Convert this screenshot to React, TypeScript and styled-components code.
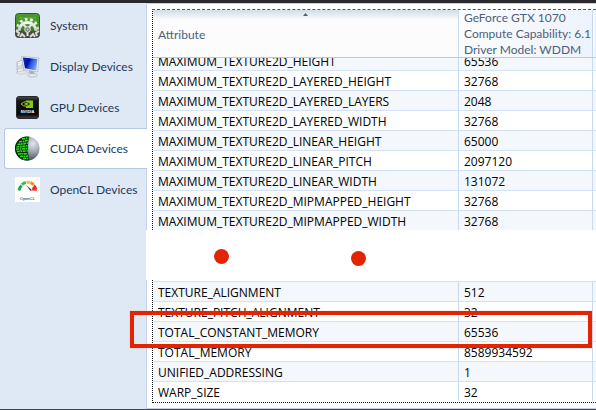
import React from "react";
import styled, { createGlobalStyle, css } from "styled-components";

const GlobalStyle = createGlobalStyle`
  * { box-sizing: border-box; }
  body {
    margin: 0;
    background: #ffffff;
    font-family: "Open Sans", "Noto Sans", sans-serif;
    font-size: 12px;
  }
`;

const Window = styled.div`
  display: flex;
  flex-direction: column;
  min-height: 100vh;
  border-top: 3px solid #29282f;
  border-bottom: 1px solid #3c4353;
  background: #dfe8f5;
  overflow: hidden;
`;

const Body = styled.div`
  display: flex;
  flex: 1;
`;

const Sidebar = styled.nav`
  display: flex;
  flex-direction: column;
  flex: none;
  width: 146px;
  padding: 2px 0 0 4px;
  font-family: Lato, sans-serif;
`;

const NavButton = styled.button<{ $selected?: boolean }>`
  display: flex;
  align-items: center;
  gap: 10px;
  height: 41px;
  padding: 0 0 0 10px;
  border: 1px solid transparent;
  border-right: 0;
  border-radius: 3px 0 0 3px;
  background: transparent;
  color: #1e395b;
  font: inherit;
  text-align: left;
  white-space: nowrap;
  ${(p) =>
    p.$selected &&
    css`
      position: relative;
      z-index: 1;
      margin-right: -1px;
      background: #ffffff;
      border-color: #b5c9e3;
    `}
`;

const IconSvg = styled.svg`
  flex: none;
  width: 25px;
  height: 25px;
`;

const Content = styled.main`
  display: flex;
  flex-direction: column;
  flex: 1;
  min-width: 0;
  background: #ffffff;
  border-top: 1px solid #c3d2e6;
`;

const Pane = styled.section<{ $edge: "top" | "bottom" }>`
  position: relative;
  border-left: 1px solid #c3d2e6;
  padding: ${(p) => (p.$edge === "top" ? "5px 0 0 5px" : "0 0 5px 5px")};
  border-bottom: ${(p) => (p.$edge === "bottom" ? "1px solid #c3d2e6" : "0")};
`;

const GridFrame = styled.div<{ $edge: "top" | "bottom" }>`
  border-left: 1px dotted #10131a;
  ${(p) =>
    p.$edge === "top"
      ? "border-top: 1px dashed #4d5666;"
      : "padding: 1px 0; border-bottom: 1px dotted #10131a;"}
`;

const Table = styled.table`
  width: 100%;
  table-layout: fixed;
  border-collapse: separate;
  border-spacing: 0;
  color: #000000;
`;

const ValueCol = styled.col`
  width: 134px;
`;

const EdgeCol = styled.col`
  width: 3px;
`;

const HeadCell = styled.th<{ $tinted?: boolean }>`
  height: 48px;
  padding: 0 0 0 5px;
  border-bottom: 1px solid #bccad6;
  border-right: 1px solid #c6daf3;
  background: ${(p) =>
    p.$tinted
      ? "linear-gradient(90deg, #fbfcfe, #edf3fc)"
      : "linear-gradient(#d3dce8, #fcfcfc 10px)"};
  color: #4c607a;
  font-family: Lato, sans-serif;
  font-weight: 400;
  line-height: 16px;
  text-align: left;
  white-space: nowrap;
  &:last-child { border-right: 0; padding: 0; }
`;

const HeadContent = styled.div<{ $top?: boolean }>`
  position: relative;
  display: flex;
  align-items: ${(p) => (p.$top ? "flex-start" : "center")};
  height: 47px;
  padding-top: ${(p) => (p.$top ? "0" : "2px")};
`;

const SortMark = styled.svg`
  position: absolute;
  top: 3px;
  left: 50%;
  width: 5px;
  height: 3px;
  margin-left: -5px;
`;

const Row = styled.tr<{ $shaded: boolean }>`
  background: ${(p) => (p.$shaded ? "#f4f7fb" : "#ffffff")};
`;

const Cell = styled.td<{ $line: boolean }>`
  padding: 0 0 0 5px;
  border-right: 1px solid #c6daf3;
  border-bottom: ${(p) => (p.$line ? "1px solid #d3e2f5" : "0")};
  &:last-child { border-right: 0; padding: 0; }
`;

const CellText = styled.div<{ $clipped?: boolean }>`
  display: flex;
  align-items: flex-end;
  height: ${(p) => (p.$clipped ? "12px" : "19px")};
  line-height: 17px;
  overflow: hidden;
  white-space: nowrap;
`;

const RedactedBand = styled.div`
  position: relative;
  height: 50px;
  background: #ffffff;
`;

const Dot = styled.span<{ $left: number; $top: number }>`
  position: absolute;
  left: ${(p) => p.$left}px;
  top: ${(p) => p.$top}px;
  width: 15px;
  height: 15px;
  border-radius: 50%;
  background: #e32400;
`;

const Highlight = styled.div`
  position: absolute;
  top: 31px;
  left: -17px;
  right: 4px;
  height: 37px;
  border: 4px solid #e32400;
  box-shadow: 0 0 1px #f3a091;
`;

const SystemIcon = () => (
  <IconSvg viewBox="0 0 25 25" aria-hidden="true">
    <defs>
      <linearGradient id="sysBg" x1="0" y1="0" x2="0" y2="1">
        <stop offset="0" stopColor="#4f9a2e" />
        <stop offset="0.6" stopColor="#3f8a22" />
        <stop offset="1" stopColor="#2c4a1c" />
      </linearGradient>
      <linearGradient id="sysGear" x1="0" y1="0" x2="0" y2="1">
        <stop offset="0" stopColor="#ffffff" />
        <stop offset="1" stopColor="#c3c4c0" />
      </linearGradient>
    </defs>
    <rect x="0.5" y="0.5" width="24" height="24" rx="3" fill="url(#sysBg)" stroke="#385527" />
    <path d="M1 19Q5 16 8 18T17 18T24 19V22Q24 24 22 24H3Q1 24 1 22Z" fill="#4b4b43" />
    <path d="M4 5H21M3 8H22" stroke="#79bd58" strokeWidth="0.8" />
    <g stroke="url(#sysGear)" fill="none">
      <path d="M4 18A8.5 8.5 0 1 1 21 18" strokeWidth="3" />
      <path d="M2.5 19A10.3 10.3 0 1 1 22.5 19" strokeWidth="2.6" strokeDasharray="2.6 2.7" />
    </g>
    <path d="M12.5 16L7 10M12.5 16L18 10M12.5 16V23" stroke="#e4e5e2" strokeWidth="2" />
    <path d="M1 18L4 20L3 23M24 18L21 20L22 23M5 24L7 21L10 24M15 24L18 21L20 24" fill="none" stroke="#dcddda" strokeWidth="2" />
    <circle cx="12.5" cy="16.5" r="2.8" fill="#767970" stroke="#f0f0ee" />
    <circle cx="12.5" cy="16.5" r="1" fill="#d9dad6" />
  </IconSvg>
);

const DisplayIcon = () => (
  <IconSvg viewBox="0 0 25 25" aria-hidden="true">
    <defs>
      <linearGradient id="dispScreen" x1="0" y1="0.3" x2="1" y2="0.7">
        <stop offset="0" stopColor="#1528bd" />
        <stop offset="0.35" stopColor="#0210a4" />
        <stop offset="0.5" stopColor="#2448d8" />
        <stop offset="1" stopColor="#86b2f8" />
      </linearGradient>
    </defs>
    <path d="M2 8L7 6L9 17L4 19L2 17Z" fill="#d4d7d9" stroke="#9da7b2" strokeWidth="0.6" />
    <path d="M3 9L7 7.5M3 11L7 9.5M3 17L8 15.5" stroke="#ffffff" />
    <path d="M6.5 2.5L24 4L22.5 18L9 15.5Z" fill="#eef1f5" stroke="#a9b3c2" strokeWidth="0.7" />
    <path d="M7.8 3.5L22.4 5L21.2 16.4L10 14.2Z" fill="url(#dispScreen)" />
    <path d="M14 16.5L19 17.5L19.5 20.5H15Z" fill="#a6adb4" />
    <ellipse cx="17.5" cy="21.3" rx="5" ry="1.8" fill="#e5e8ea" stroke="#a5adb6" strokeWidth="0.7" />
    <path d="M1 18.5L9 16.5L14 18.5L5 20.5Z" fill="#e3e6ea" stroke="#b5bbc3" strokeWidth="0.5" />
  </IconSvg>
);

const GpuIcon = () => (
  <IconSvg viewBox="0 0 25 25" aria-hidden="true">
    <defs>
      <linearGradient id="gpuBg" x1="0" y1="0" x2="0" y2="1">
        <stop offset="0" stopColor="#4c4c4c" />
        <stop offset="0.2" stopColor="#151515" />
        <stop offset="0.8" stopColor="#080808" />
        <stop offset="1" stopColor="#444444" />
      </linearGradient>
    </defs>
    <rect x="1.5" y="1.5" width="22" height="22" rx="2.5" fill="url(#gpuBg)" stroke="#292929" />
    <path d="M11 5.5H18V13H11Z" fill="#86c81a" />
    <path d="M6 9Q11 4.5 16 9Q11 13.5 6 9Z" fill="#0b1206" stroke="#8fd122" />
    <path d="M9 9Q11 6.8 14 9Q11 11.2 9 9Z" fill="#86c81a" />
    <text x="12.5" y="18.4" textAnchor="middle" fontFamily="Liberation Sans, sans-serif" fontWeight="700" fontSize="4" fill="#ffffff">NVIDIA</text>
  </IconSvg>
);

const CudaIcon = () => (
  <IconSvg viewBox="0 0 25 25" aria-hidden="true">
    <defs>
      <radialGradient id="cudaBall" cx="0.72" cy="0.3" r="0.7">
        <stop offset="0" stopColor="#e3e7ec" />
        <stop offset="0.45" stopColor="#a3acb8" />
        <stop offset="1" stopColor="#49525d" />
      </radialGradient>
    </defs>
    <circle cx="12.5" cy="12.5" r="12" fill="url(#cudaBall)" />
    <path d="M14.5 0.8A12 12 0 1 0 14.5 24.2Q13 21 13 12.5T14.5 0.8Z" fill="#063006" />
    <g stroke="#2ade1e" strokeWidth="1.5" fill="none" strokeDasharray="3 0.7 1.5 0.7">
      <path d="M7 3L13.5 2M4 6L13 4.5M2.5 8.5L13 7M1.5 11L13 9.8M1.2 13.3L13 12.5M1.8 15.5L13 15M3 18L13 17.6M5 20.5L13 20M8 22.7L14 22.5" />
    </g>
    <path d="M6 5V20M9 2.5V22" stroke="#64e331" strokeWidth="0.8" strokeDasharray="1 2" />
  </IconSvg>
);

const OpenClIcon = () => (
  <IconSvg viewBox="0 0 25 25" aria-hidden="true">
    <rect width="25" height="25" fill="#ffffff" />
    <g fill="none" strokeWidth="3">
      <path d="M4 13.5A9 9 0 0 1 6.5 8.5" stroke="#15a45b" />
      <path d="M7 7.8A9 9 0 0 1 10.8 5.4" stroke="#45b649" />
      <path d="M11.5 5.2A9 9 0 0 1 15 5.5" stroke="#edc430" />
      <path d="M15.5 5.7A9 9 0 0 1 18.7 7.8" stroke="#f28b26" />
    </g>
    <path d="M19 8.2A9 9 0 0 1 21 12" fill="none" stroke="#ef2d20" strokeWidth="2.2" />
    <path d="M17.5 10L21 9.5L22 13.8L17 13.4Z" fill="#ef2d20" />
    <path d="M11 8L17 13L15.5 14Z" fill="#7d2a22" />
    <text x="12.5" y="22.8" textAnchor="middle" fontFamily="Liberation Sans, sans-serif" fontSize="4" fill="#111111">OpenCL</text>
  </IconSvg>
);

const navItems = [
  { label: "System", Icon: SystemIcon },
  { label: "Display Devices", Icon: DisplayIcon },
  { label: "GPU Devices", Icon: GpuIcon },
  { label: "CUDA Devices", Icon: CudaIcon, selected: true },
  { label: "OpenCL Devices", Icon: OpenClIcon },
];

type Attribute = [name: string, value: string];

const textureRows: Attribute[] = [
  ["MAXIMUM_TEXTURE2D_HEIGHT", "65536"],
  ["MAXIMUM_TEXTURE2D_LAYERED_HEIGHT", "32768"],
  ["MAXIMUM_TEXTURE2D_LAYERED_LAYERS", "2048"],
  ["MAXIMUM_TEXTURE2D_LAYERED_WIDTH", "32768"],
  ["MAXIMUM_TEXTURE2D_LINEAR_HEIGHT", "65000"],
  ["MAXIMUM_TEXTURE2D_LINEAR_PITCH", "2097120"],
  ["MAXIMUM_TEXTURE2D_LINEAR_WIDTH", "131072"],
  ["MAXIMUM_TEXTURE2D_MIPMAPPED_HEIGHT", "32768"],
  ["MAXIMUM_TEXTURE2D_MIPMAPPED_WIDTH", "32768"],
];

const memoryRows: Attribute[] = [
  ["TEXTURE_ALIGNMENT", "512"],
  ["TEXTURE_PITCH_ALIGNMENT", "32"],
  ["TOTAL_CONSTANT_MEMORY", "65536"],
  ["TOTAL_MEMORY", "8589934592"],
  ["UNIFIED_ADDRESSING", "1"],
  ["WARP_SIZE", "32"],
];

const Columns = () => (
  <colgroup>
    <col />
    <ValueCol />
    <EdgeCol />
  </colgroup>
);

const Rows = ({ items, clipFirst }: { items: Attribute[]; clipFirst?: boolean }) => (
  <tbody>
    {items.map(([name, value], i) => {
      const clipped = clipFirst && i === 0;
      const line = i < items.length - 1;
      return (
        <Row key={name} $shaded={i % 2 === 0}>
          <Cell $line={line}><CellText $clipped={clipped}>{name}</CellText></Cell>
          <Cell $line={line}><CellText $clipped={clipped}>{value}</CellText></Cell>
          <Cell $line={line} />
        </Row>
      );
    })}
  </tbody>
);

const MemoryTable = styled(Table)`
  border-top: 1px solid #d3e2f5;
`;

export default function App() {
  return (
    <>
      <GlobalStyle />
      <Window>
        <Body>
          <Sidebar>
            {navItems.map(({ label, Icon, selected }) => (
              <NavButton key={label} type="button" $selected={selected} aria-current={selected ? "page" : undefined}>
                <Icon />
                {label}
              </NavButton>
            ))}
          </Sidebar>
          <Content>
            <Pane $edge="top">
              <GridFrame $edge="top">
                <Table>
                  <Columns />
                  <thead>
                    <tr>
                      <HeadCell scope="col" aria-sort="ascending">
                        <HeadContent>
                          Attribute
                          <SortMark viewBox="0 0 5 3" aria-hidden="true">
                            <path d="M0 3L2.5 0L5 3Z" fill="#4c607a" />
                          </SortMark>
                        </HeadContent>
                      </HeadCell>
                      <HeadCell scope="col" $tinted>
                        <HeadContent $top>
                          <span>
                            GeForce GTX 1070<br />
                            Compute Capability: 6.1<br />
                            Driver Model: WDDM
                          </span>
                        </HeadContent>
                      </HeadCell>
                      <HeadCell as="td" $tinted />
                    </tr>
                  </thead>
                  <Rows items={textureRows} clipFirst />
                </Table>
              </GridFrame>
            </Pane>
            <RedactedBand>
              <Dot $left={68} $top={19} />
              <Dot $left={205} $top={21} />
            </RedactedBand>
            <Pane $edge="bottom">
              <GridFrame $edge="bottom">
                <MemoryTable>
                  <Columns />
                  <Rows items={memoryRows} />
                </MemoryTable>
              </GridFrame>
              <Highlight />
            </Pane>
          </Content>
        </Body>
      </Window>
    </>
  );
}
